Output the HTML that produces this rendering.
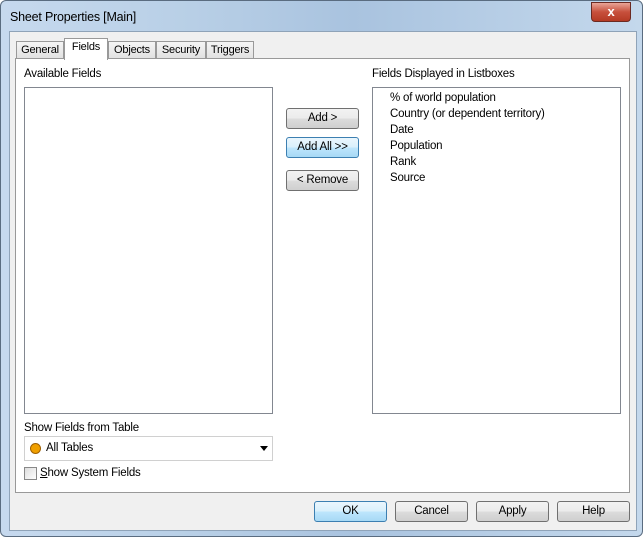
<!DOCTYPE html><html><head><style>
body{margin:0;width:643px;height:537px;overflow:hidden;font-family:"Liberation Sans",sans-serif;font-size:11.5px;color:#000;background:#fff;letter-spacing:-0.2px}
.win{position:absolute;left:0;top:0;width:641px;height:535px;border:1px solid #5a6c80;border-radius:6px;background:linear-gradient(90deg,#c6d9ee 0%,#b8cfe6 30%,#a9c3df 55%,#c4d8ec 100%)}
.cli{position:absolute;left:8px;top:30px;width:626px;height:498px;background:#f0f0f0;border:1px solid #8fa3b8}
.a{position:absolute}
.close{left:590px;top:1px;width:38px;height:18px;background:linear-gradient(#e9a597,#c7503c 50%,#b43a24);border:1px solid #6b2a22;border-radius:0 0 4px 4px;color:#fff;font-weight:bold;text-align:center;line-height:18px;font-size:13px}
.tab{position:absolute;top:41px;height:17px;border:1px solid #999;border-bottom:none;background:linear-gradient(#f5f5f5,#e0e0e0);text-align:center;line-height:17px;font-size:11px}
.panel{left:15px;top:58px;width:613px;height:433px;border:1px solid #999;background:#fff}
.list{background:#fff;border:1px solid #828790}
.btn{position:absolute;height:19px;border:1px solid #707070;border-radius:3px;background:linear-gradient(#f2f2f2,#ebebeb 50%,#dcdcdc 51%,#cfcfcf);text-align:center;line-height:19px}
</style></head><body>
<div class="win">
<div class="a" style="left:9px;top:9px;font-size:12.5px">Sheet Properties [Main]</div>
<div class="a close">x</div>
<div class="cli"></div>
</div>
<div class="tab" style="left:16px;width:46px">General</div>
<div class="tab" style="left:64px;width:42px;top:38px;height:21px;background:#fff;z-index:2">Fields</div>
<div class="tab" style="left:108px;width:46px">Objects</div>
<div class="tab" style="left:156px;width:48px">Security</div>
<div class="tab" style="left:206px;width:46px">Triggers</div>
<div class="a panel"></div>
<div class="a" style="left:24px;top:68px">Available Fields</div>
<div class="a" style="left:372px;top:68px">Fields Displayed in Listboxes</div>
<div class="a list" style="left:24px;top:87px;width:247px;height:325px"></div>
<div class="a list" style="left:372px;top:87px;width:247px;height:325px;line-height:16px"><div style="position:absolute;left:17px;top:2px">% of world population<br>Country (or dependent territory)<br>Date<br>Population<br>Rank<br>Source</div></div>
<div class="btn" style="left:286px;top:108px;width:71px">Add &gt;</div>
<div class="btn" style="left:286px;top:137px;width:71px;border-color:#3c7fb1;background:linear-gradient(#eaf6fd,#d9f0fc 50%,#bee6fd 51%,#a7d9f5)">Add All &gt;&gt;</div>
<div class="btn" style="left:286px;top:170px;width:71px">&lt; Remove</div>
<div class="a" style="left:24px;top:422px">Show Fields from Table</div>
<div class="a" style="left:24px;top:436px;width:247px;height:23px;border:1px solid #d0d0d0;background:#fff"></div>
<div class="a" style="left:30px;top:443px;width:9px;height:9px;border-radius:50%;background:#f0a000;border:1px solid #a06000"></div>
<div class="a" style="left:46px;top:442px">All Tables</div>
<div class="a" style="left:260px;top:446px;border:4px solid transparent;border-top:5px solid #000"></div>
<div class="a" style="left:24px;top:467px;width:11px;height:11px;border:1px solid #888;background:linear-gradient(135deg,#ddd,#fff)"></div>
<div class="a" style="left:40px;top:467px"><u>S</u>how System Fields</div>
<div class="btn" style="left:314px;top:501px;width:71px;border-color:#3c7fb1;background:linear-gradient(#eaf6fd,#d9f0fc 50%,#bee6fd 51%,#a7d9f5)">OK</div>
<div class="btn" style="left:395px;top:501px;width:71px">Cancel</div>
<div class="btn" style="left:476px;top:501px;width:71px">Apply</div>
<div class="btn" style="left:557px;top:501px;width:71px">Help</div>
</body></html>
